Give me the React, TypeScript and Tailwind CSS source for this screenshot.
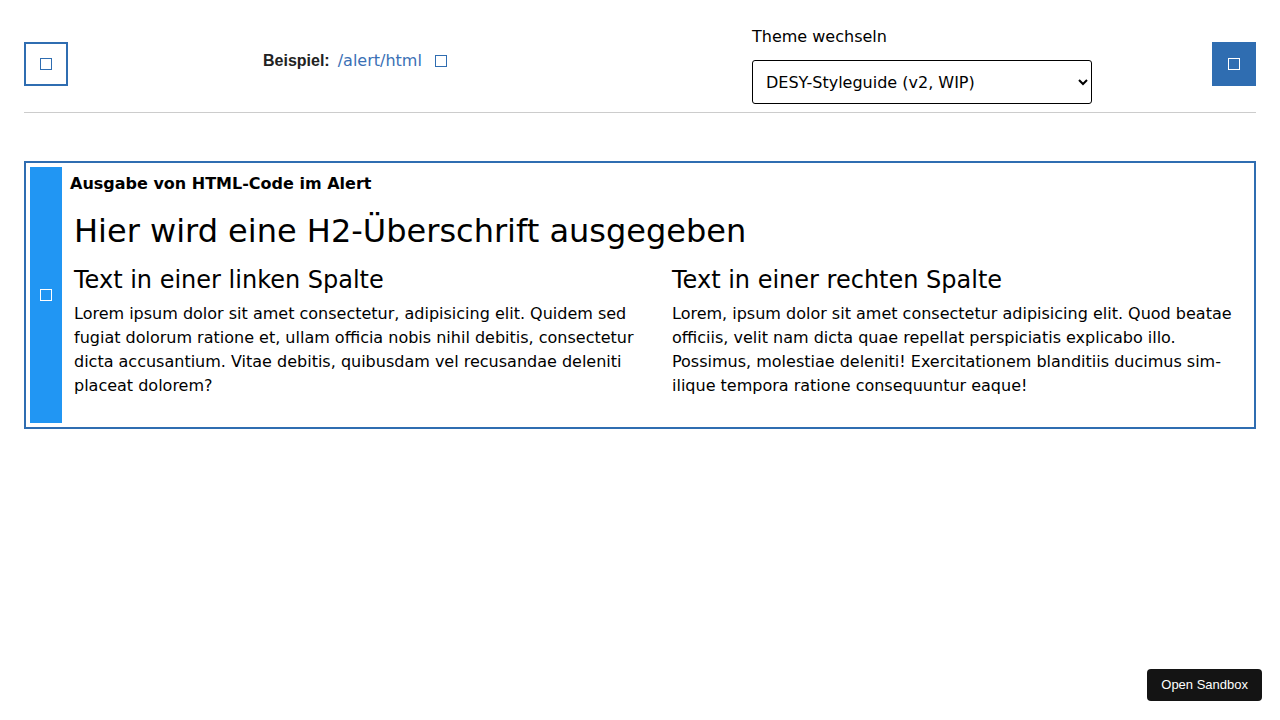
import React from "react";

const verdana = { fontFamily: '"DejaVu Sans", Verdana, sans-serif' };
const helvetica = { fontFamily: '"Liberation Sans", Arial, sans-serif' };

function SquareIcon({ className = "" }: { className?: string }) {
  return <span className={`inline-block h-[12px] w-[12px] border ${className}`} aria-hidden="true" />;
}

export default function App() {
  return (
    <div className="min-h-[720px] bg-white px-6 text-black" style={verdana}>
      <header className="flex items-center border-b border-[#cccccc] pt-6 pb-2">
        <button className="flex h-[44px] w-[44px] items-center justify-center border-2 border-[#2f6db1] bg-white">
          <SquareIcon className="border-[#2f6db1]" />
        </button>

        <div className="ml-[195px] flex w-[489px] items-center self-start pt-[25px] text-[16px] leading-6">
          <span className="font-bold text-[#222222]" style={helvetica}>
            Beispiel:
          </span>
          <a href="#" className="ml-2 text-[#3a70b5]">
            /alert/html
          </a>
          <SquareIcon className="ml-[13px] border-[#2f6db1]" />
        </div>

        <div className="flex w-[460px] flex-col">
          <label className="pt-px text-[16px] leading-6">Theme wechseln</label>
          <select
            className="mt-[11px] h-[44px] w-[340px] rounded-[3px] border border-black bg-white pl-[9px] text-[16px] text-black"
            style={verdana}
            defaultValue="desy2"
          >
            <option value="desy2">DESY-Styleguide (v2, WIP)</option>
          </select>
        </div>

        <button className="flex h-[44px] w-[44px] items-center justify-center bg-[#2f6db1]">
          <SquareIcon className="border-white" />
        </button>
      </header>

      <section className="mt-12 flex border-2 border-[#2f6db1] p-1">
        <div className="flex w-[32px] shrink-0 items-center justify-center bg-[#2196f3]">
          <SquareIcon className="border-white" />
        </div>
        <div className="flex-1 px-2 pt-[5px] pb-[25px]">
          <div className="text-[16px] font-bold leading-6">Ausgabe von HTML-Code im Alert</div>
          <div className="px-1">
            <h2 className="mt-[15px] text-[32px] leading-[40px]">Hier wird eine H2-Überschrift ausgegeben</h2>
            <div className="mt-[13px] grid grid-cols-2 gap-x-8">
              <div>
                <h3 className="text-[24px] leading-[32px]">Text in einer linken Spalte</h3>
                <p className="mt-[6px] text-[16px] leading-6">
                  Lorem ipsum dolor sit amet consectetur, adipisicing elit. Quidem sed fugiat dolorum ratione et, ullam
                  officia nobis nihil debitis, consectetur dicta accusantium. Vitae debitis, quibusdam vel recusandae
                  deleniti placeat dolorem?
                </p>
              </div>
              <div>
                <h3 className="text-[24px] leading-[32px]">Text in einer rechten Spalte</h3>
                <p className="mt-[6px] text-[16px] leading-6">
                  Lorem, ipsum dolor sit amet consectetur adipisicing elit. Quod beatae officiis, velit nam dicta quae
                  repellat perspiciatis explicabo illo. Possimus, molestiae deleniti! Exercitationem blanditiis ducimus
                  sim{"\u00AD"}ilique tempora ratione consequuntur eaque!
                </p>
              </div>
            </div>
          </div>
        </div>
      </section>

      <button
        className="fixed right-[18px] bottom-[19px] rounded-[4px] bg-[#141414] px-[14px] py-[7px] text-[13px] leading-[18px] text-white"
        style={helvetica}
      >
        Open Sandbox
      </button>
    </div>
  );
}
